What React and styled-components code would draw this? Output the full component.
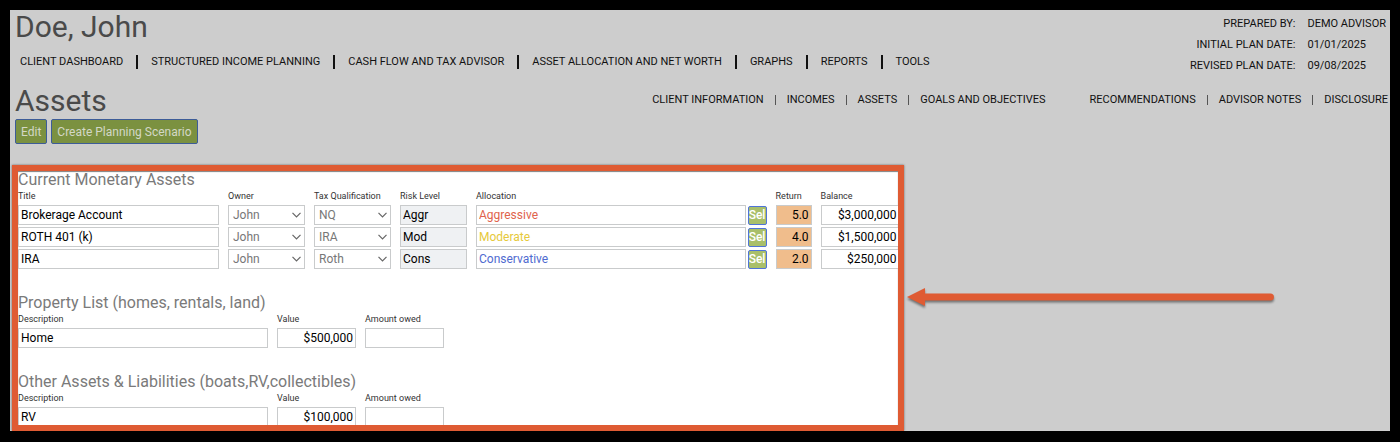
import React from 'react';
import styled, { createGlobalStyle } from 'styled-components';

const GlobalStyle = createGlobalStyle`
  * { box-sizing: border-box; }
  body { margin: 0; background: #000; font-family: Roboto, "Liberation Sans", sans-serif; }
  h1, h2, h3, dl, dd { margin: 0; font-weight: 400; }
  input, select, button { font-family: inherit; }
`;

// --- PAGE ---
const Page = styled.div`
  display: flex;
  height: 100vh;
  padding: 10px 10px 11px;
`;
const Panel = styled.div`
  flex: 1;
  min-width: 0;
  display: flex;
  flex-direction: column;
  background: #cdcdcd;
  color: #111;
`;
const Header = styled.header`
  display: flex;
  justify-content: space-between;
  height: 72px;
  padding: 0 2px 0 5px;
`;
const PageTitle = styled.h1`
  font-size: 30px;
  line-height: 34px;
  color: #4a4a4a;
`;
const SectionBar = styled.div`
  display: flex;
  justify-content: space-between;
  padding: 2px 2px 0 5px;
`;

// --- NAVIGATION ---
const MainNav = styled.nav`
  display: flex;
  align-items: center;
  gap: 13px;
  margin-top: 10px;
  padding-left: 5px;
`;
const SubNav = styled.nav`
  display: flex;
  gap: 44px;
  padding-top: 8px;
`;
const NavGroup = styled.div`
  display: flex;
  align-items: center;
  gap: 11px;
  height: 16px;
`;
const NavLink = styled.a`
  color: inherit;
  font-size: 11px;
  line-height: 16px;
  text-decoration: none;
  white-space: nowrap;
`;
const Divider = styled.span`
  width: ${props => (props.$thin ? '1px' : '2px')};
  height: ${props => (props.$thin ? '10px' : '14px')};
  background: ${props => (props.$thin ? '#555' : '#111')};
`;

const PlanInfo = styled.dl`
  display: grid;
  grid-template-columns: auto auto;
  grid-auto-rows: 21px;
  column-gap: 12px;
  align-content: start;
  padding: 3px 2px 0 0;
  font-size: 11px;
  line-height: 21px;

  dt { text-align: right; }
`;

// --- BUTTONS ---
const Actions = styled.div`
  display: flex;
  gap: 4px;
  padding: 1px 5px 21px;
`;
const ActionButton = styled.button`
  height: 25px;
  padding: 0 5px;
  border: 1px solid #3d5c98;
  border-radius: 2px;
  background: #7b9140;
  color: #d3d8c6;
  font-size: 12px;
`;
const SelButton = styled.button`
  display: block;
  width: 19px;
  height: 19px;
  padding: 0;
  border: 1px solid #4f74d8;
  border-radius: 2px;
  background: #a9bf6a;
  color: #fff;
  font-size: 12px;
  font-weight: 500;
  line-height: 16px;
`;

// --- HIGHLIGHTED AREA ---
const Workspace = styled.main`
  flex: 1;
  display: flex;
  min-height: 0;
  padding-left: 2px;
`;
const Frame = styled.div`
  width: 64.7%;
  overflow: hidden;
  border: 6px solid #df5b33;
  background: #fff;
  box-shadow: 0 0 2px rgba(0, 0, 0, 0.5), inset 0 1px 1px rgba(0, 0, 0, 0.5);
`;
const ArrowArea = styled.div`
  flex: 1;
  padding: 120px 120px 0 3px;

  svg { display: block; width: 100%; height: 24px; overflow: visible; filter: drop-shadow(0 2px 1px rgba(0, 0, 0, 0.45)); }
`;

// --- TABLES ---
const Section = styled.section`
  margin-bottom: 23px;
`;
const SectionTitle = styled.h3`
  font-size: 16px;
  line-height: 18px;
  color: #7a7a7a;
`;
const Table = styled.table`
  width: ${props => (props.$wide ? 'calc(100% + 2px)' : 'auto')};
  table-layout: fixed;
  border-collapse: collapse;

  th { height: 16px; padding: 0; font-size: 9px; line-height: 15px; font-weight: 400; text-align: left; vertical-align: top; color: #333; white-space: nowrap; }
  td { height: 22px; padding: 0 9px 2px 0; }
  td.tight { padding-right: 2px; }
  td:last-child { padding-right: 0; }
`;
const Col = styled.col`
  width: ${props => (props.$w ? `${props.$w}px` : 'auto')};
`;
const Field = styled.input`
  display: block;
  width: 100%;
  height: 20px;
  padding: 0 2px;
  border: 1px solid #c9cbcc;
  border-radius: 0;
  outline: none;
  background: ${props => props.$bg || '#fff'};
  color: ${props => props.$color || '#000'};
  font-size: 12px;
  text-align: ${props => (props.$right ? 'right' : 'left')};
`;
const SelectWrap = styled.div`
  position: relative;

  svg { position: absolute; right: 4px; top: 7px; pointer-events: none; }
`;
const Select = styled.select`
  display: block;
  width: 100%;
  height: 20px;
  padding: 0 4px;
  appearance: none;
  border: 1px solid #c9cbcc;
  border-radius: 0;
  background: #fff;
  color: #777;
  font-size: 12px;
`;

const mainLinks = ['CLIENT DASHBOARD', 'STRUCTURED INCOME PLANNING', 'CASH FLOW AND TAX ADVISOR', 'ASSET ALLOCATION AND NET WORTH', 'GRAPHS', 'REPORTS', 'TOOLS'];
const planLinks = ['CLIENT INFORMATION', 'INCOMES', 'ASSETS', 'GOALS AND OBJECTIVES'];
const noteLinks = ['RECOMMENDATIONS', 'ADVISOR NOTES', 'DISCLOSURE'];

const monetaryAssets = [
  { title: 'Brokerage Account', owner: 'John', tax: 'NQ', risk: 'Aggr', allocation: 'Aggressive', color: '#e0634c', rate: '5.0', balance: '$3,000,000' },
  { title: 'ROTH 401 (k)', owner: 'John', tax: 'IRA', risk: 'Mod', allocation: 'Moderate', color: '#e6c93a', rate: '4.0', balance: '$1,500,000' },
  { title: 'IRA', owner: 'John', tax: 'Roth', risk: 'Cons', allocation: 'Conservative', color: '#4f6bd0', rate: '2.0', balance: '$250,000' },
];

const Links = ({ items, thin }) => items.map((item, i) => (
  <React.Fragment key={item}>
    {i > 0 && <Divider $thin={thin} />}
    <NavLink href="#">{item}</NavLink>
  </React.Fragment>
));

const Dropdown = ({ label, value, options }) => (
  <SelectWrap>
    <Select aria-label={label} defaultValue={value}>
      {options.map(option => <option key={option}>{option}</option>)}
    </Select>
    <svg width="9" height="6" viewBox="0 0 9 6" fill="none" stroke="#666" strokeWidth="1.2">
      <path d="M0.5 0.8 L4.5 4.8 L8.5 0.8" />
    </svg>
  </SelectWrap>
);

const PropertySection = ({ heading, description, value }) => (
  <Section>
    <SectionTitle>{heading}</SectionTitle>
    <Table>
      <colgroup><Col $w={259} /><Col $w={88} /><Col $w={79} /></colgroup>
      <thead>
        <tr><th>Description</th><th>Value</th><th>Amount owed</th></tr>
      </thead>
      <tbody>
        <tr>
          <td><Field aria-label="Description" defaultValue={description} /></td>
          <td><Field aria-label="Value" $right defaultValue={value} /></td>
          <td><Field aria-label="Amount owed" $right /></td>
        </tr>
      </tbody>
    </Table>
  </Section>
);

const App = () => (
  <Page>
    <GlobalStyle />
    <Panel>
      <Header>
        <div>
          <PageTitle>Doe, John</PageTitle>
          <MainNav><Links items={mainLinks} /></MainNav>
        </div>
        <PlanInfo>
          <dt>PREPARED BY:</dt><dd>DEMO ADVISOR</dd>
          <dt>INITIAL PLAN DATE:</dt><dd>01/01/2025</dd>
          <dt>REVISED PLAN DATE:</dt><dd>09/08/2025</dd>
        </PlanInfo>
      </Header>

      <SectionBar>
        <PageTitle as="h2">Assets</PageTitle>
        <SubNav>
          <NavGroup><Links items={planLinks} thin /></NavGroup>
          <NavGroup><Links items={noteLinks} thin /></NavGroup>
        </SubNav>
      </SectionBar>
      <Actions>
        <ActionButton>Edit</ActionButton>
        <ActionButton>Create Planning Scenario</ActionButton>
      </Actions>

      <Workspace>
        <Frame>
          <Section>
            <SectionTitle>Current Monetary Assets</SectionTitle>
            <Table $wide>
              <colgroup>
                <Col $w={210} /><Col $w={86} /><Col $w={86} /><Col $w={76} />
                <Col /><Col $w={28} /><Col $w={45} /><Col $w={79} />
              </colgroup>
              <thead>
                <tr>
                  <th>Title</th><th>Owner</th><th>Tax Qualification</th><th>Risk Level</th>
                  <th colSpan={2}>Allocation</th><th>Return</th><th>Balance</th>
                </tr>
              </thead>
              <tbody>
                {monetaryAssets.map(asset => (
                  <tr key={asset.title}>
                    <td><Field aria-label="Title" defaultValue={asset.title} /></td>
                    <td><Dropdown label="Owner" value={asset.owner} options={['John']} /></td>
                    <td><Dropdown label="Tax Qualification" value={asset.tax} options={['NQ', 'IRA', 'Roth']} /></td>
                    <td><Field aria-label="Risk Level" $bg="#eff1f3" readOnly defaultValue={asset.risk} /></td>
                    <td className="tight"><Field aria-label="Allocation" $color={asset.color} defaultValue={asset.allocation} /></td>
                    <td><SelButton>Sel</SelButton></td>
                    <td><Field aria-label="Return" $bg="#f0bd8c" $right defaultValue={asset.rate} /></td>
                    <td><Field aria-label="Balance" $right defaultValue={asset.balance} /></td>
                  </tr>
                ))}
              </tbody>
            </Table>
          </Section>
          <PropertySection heading="Property List (homes, rentals, land)" description="Home" value="$500,000" />
          <PropertySection heading="Other Assets & Liabilities (boats,RV,collectibles)" description="RV" value="$100,000" />
        </Frame>
        <ArrowArea>
          <svg>
            <path d="M0 12 L18 3 V21 Z" fill="#df5b33" />
            <line x1="16" y1="12" x2="100%" y2="12" stroke="#df5b33" strokeWidth="7" strokeLinecap="round" />
          </svg>
        </ArrowArea>
      </Workspace>
    </Panel>
  </Page>
);

export default App;
